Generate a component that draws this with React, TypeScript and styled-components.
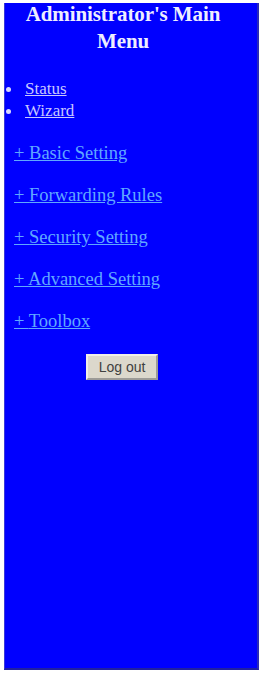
import React from "react";
import styled, { createGlobalStyle } from "styled-components";

const GlobalStyle = createGlobalStyle`
  html, body {
    margin: 0;
    padding: 0;
    background: #ffffff;
  }
`;

const Page = styled.div`
  padding: 3px 3px 3px 4px;
  height: 673px;
  box-sizing: border-box;
`;

const Panel = styled.div`
  height: 100%;
  box-sizing: border-box;
  padding-right: 16px;
  background: #0000ff;
  border-left: 1px solid #3a3ad8;
  border-right: 2px solid #2a2ab8;
  border-bottom: 2px solid #2020a0;
  font-family: "Liberation Serif", "Times New Roman", serif;
  display: flex;
  flex-direction: column;
`;

const Title = styled.h1`
  margin: -2px 0 0;
  font-size: 21px;
  line-height: 27px;
  font-weight: bold;
  color: #eeeeff;
  text-align: center;
  letter-spacing: -0.1px;
  white-space: nowrap;
`;

const QuickList = styled.div`
  margin-top: 23px;
  display: flex;
  flex-direction: column;
`;

const QuickRow = styled.div`
  display: flex;
  align-items: center;
  height: 22px;
  padding-left: 1px;
`;

const Bullet = styled.span`
  width: 5px;
  height: 5px;
  border-radius: 50%;
  background: #d8d8ff;
  margin-right: 14px;
`;

const QuickLink = styled.a`
  font-size: 17px;
  color: #c8c8ff;
  text-decoration: underline;
`;

const MenuList = styled.div`
  margin-top: 10px;
  display: flex;
  flex-direction: column;
  padding-left: 9px;
`;

const MenuLink = styled.a`
  font-size: 18.5px;
  line-height: 42px;
  height: 42px;
  color: #60a8ff;
  text-decoration: underline;
  white-space: nowrap;
`;

const ButtonRow = styled.div`
  display: flex;
  justify-content: center;
  margin-top: 12px;
  padding-right: 2px;
`;

const LogoutButton = styled.button`
  width: 72px;
  height: 26px;
  background: #dcd8cc;
  border: 2px outset #f0eee8;
  font-family: "Liberation Sans", Arial, sans-serif;
  font-size: 14px;
  color: #404040;
  padding: 0;
`;

const quick = ["Status", "Wizard"];
const menu = [
  "Basic Setting",
  "Forwarding Rules",
  "Security Setting",
  "Advanced Setting",
  "Toolbox",
];

export default function App() {
  return (
    <>
      <GlobalStyle />
      <Page>
        <Panel>
          <Title>
            Administrator's Main
            <br />
            Menu
          </Title>
          <QuickList>
            {quick.map((q) => (
              <QuickRow key={q}>
                <Bullet />
                <QuickLink href="#">{q}</QuickLink>
              </QuickRow>
            ))}
          </QuickList>
          <MenuList>
            {menu.map((m) => (
              <MenuLink key={m} href="#">
                + {m}
              </MenuLink>
            ))}
          </MenuList>
          <ButtonRow>
            <LogoutButton>Log out</LogoutButton>
          </ButtonRow>
        </Panel>
      </Page>
    </>
  );
}
